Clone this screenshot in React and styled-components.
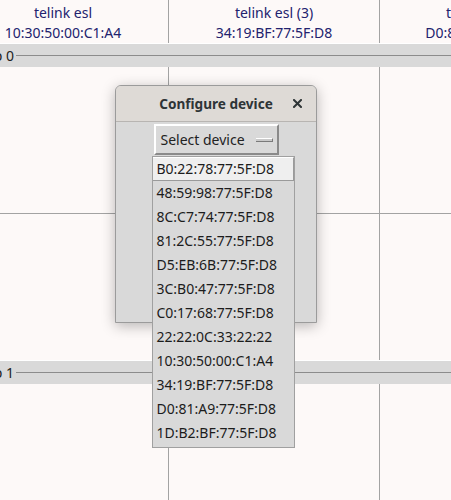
import React from 'react'
import styled, { createGlobalStyle } from 'styled-components'

const GlobalStyle = createGlobalStyle`
  html, body {
    margin: 0;
    padding: 0;
    background: #fdf9f8;
    overflow: hidden;
  }
  body {
    font-family: "Noto Sans", "DejaVu Sans", sans-serif;
    font-size: 14px;
  }
`

const Page = styled.div`
  position: relative;
  width: 451px;
  height: 500px;
  overflow: hidden;
`

// the table is scrolled a little to the right, so its first column starts off screen
const Sheet = styled.div`
  margin-left: -42px;
  width: 493px;
  height: 500px;
  display: flex;
  flex-direction: column;
`

const Header = styled.div`
  display: flex;
  height: 43px;
  flex-shrink: 0;
  border-bottom: 1px solid #ffffff;
`

const HeaderCell = styled.div`
  flex: 0 0 ${props => props.$w}px;
  box-sizing: border-box;
  border-right: 1px solid #a3a3a3;
  display: flex;
  flex-direction: column;
  align-items: center;
  padding-top: 3px;
  line-height: 20px;
  color: #22226e;
  white-space: nowrap;
`

const GroupBar = styled.div`
  height: 23px;
  flex-shrink: 0;
  background: #d9d9d9;
  border-top: ${props => (props.$top ? '1px solid #ffffff' : 'none')};
  display: flex;
  align-items: center;
  color: #222222;
  white-space: nowrap;
`

const GroupLabel = styled.span`
  margin-left: 3px;
`

const GroupRule = styled.div`
  flex: 1;
  height: 1px;
  margin-left: 2px;
  background: #8c8c8c;
`

const Grid = styled.div`
  height: ${props => (props.$h ? `${props.$h}px` : 'auto')};
  flex: ${props => (props.$h ? '0 0 auto' : '1')};
  display: flex;
  flex-direction: column;
`

const GridRow = styled.div`
  display: flex;
  height: ${props => (props.$h ? `${props.$h}px` : 'auto')};
  flex: ${props => (props.$h ? '0 0 auto' : '1')};
  box-sizing: border-box;
  border-bottom: ${props => (props.$line ? '1px solid #a3a3a3' : 'none')};
`

const GridCell = styled.div`
  flex: 0 0 ${props => props.$w}px;
  box-sizing: border-box;
  border-right: 1px solid #a3a3a3;
`

const Dialog = styled.div`
  position: absolute;
  left: 115px;
  top: 85px;
  width: 202px;
  height: 238px;
  box-sizing: border-box;
  border: 1px solid #9b9b9b;
  border-radius: 6px 6px 0 0;
  background: #d9d9d9;
  box-shadow: 0 3px 14px rgba(0, 0, 0, 0.28);
  display: flex;
  flex-direction: column;
`

const TitleBar = styled.div`
  position: relative;
  height: 35px;
  flex-shrink: 0;
  background: #dedad6;
  border-bottom: 1px solid #b8b5b2;
  border-radius: 5px 5px 0 0;
  display: flex;
  align-items: center;
  justify-content: center;
  font-size: 13.6px;
  font-weight: bold;
  color: #2e3436;
`

const CloseButton = styled.div`
  position: absolute;
  right: 14px;
  top: 13px;
  width: 9px;
  height: 9px;
  display: flex;
`

const DialogBody = styled.div`
  flex: 1;
  display: flex;
  flex-direction: column;
  align-items: center;
  padding-top: 2px;
`

const SelectWrap = styled.div`
  position: relative;
`

const SelectButton = styled.div`
  width: 125px;
  height: 31px;
  box-sizing: border-box;
  border: 2px solid;
  border-color: #ffffff #8a8a8a #8a8a8a #ffffff;
  background: #d9d9d9;
  display: flex;
  align-items: center;
  justify-content: space-between;
  padding: 0 4px 0 5px;
  color: #222222;
`

const Indicator = styled.div`
  width: 16px;
  height: 2px;
  background: #c9c9c9;
  border-top: 1px solid #ffffff;
  border-bottom: 1px solid #7a7a7a;
  border-right: 1px solid #7a7a7a;
`

const Menu = styled.div`
  position: absolute;
  left: -2px;
  top: 32px;
  width: 143px;
  box-sizing: border-box;
  border: 1px solid #a0a0a0;
  background: #d9d9d9;
  padding: 0 0 2px;
  z-index: 2;
`

const MenuItem = styled.div`
  height: 24px;
  box-sizing: border-box;
  padding-left: 4px;
  line-height: ${props => (props.$active ? '22px' : '24px')};
  color: #1c1c1c;
  white-space: nowrap;
  background: ${props => (props.$active ? '#efefef' : 'transparent')};
  border-top: ${props => (props.$active ? '1px solid #ffffff' : 'none')};
  border-bottom: ${props => (props.$active ? '1px solid #9a9a9a' : 'none')};
  border-right: ${props => (props.$active ? '1px solid #9a9a9a' : 'none')};
`

const columns = [
  { w: 211, name: 'telink esl', mac: '10:30:50:00:C1:A4' },
  { w: 211, name: 'telink esl (3)', mac: '34:19:BF:77:5F:D8' },
  { w: 211, name: 'telink esl (2)', mac: 'D0:81:A9:77:5F:D8' },
]

const devices = [
  'B0:22:78:77:5F:D8',
  '48:59:98:77:5F:D8',
  '8C:C7:74:77:5F:D8',
  '81:2C:55:77:5F:D8',
  'D5:EB:6B:77:5F:D8',
  '3C:B0:47:77:5F:D8',
  'C0:17:68:77:5F:D8',
  '22:22:0C:33:22:22',
  '10:30:50:00:C1:A4',
  '34:19:BF:77:5F:D8',
  'D0:81:A9:77:5F:D8',
  '1D:B2:BF:77:5F:D8',
]

function Cells() {
  return columns.map(col => <GridCell key={col.name} $w={col.w} />)
}

export default function App() {
  return (
    <Page>
      <GlobalStyle />
      <Sheet>
        <Header>
          {columns.map(col => (
            <HeaderCell key={col.name} $w={col.w}>
              <span>{col.name}</span>
              <span>{col.mac}</span>
            </HeaderCell>
          ))}
        </Header>
        <GroupBar>
          <GroupLabel>Group 0</GroupLabel>
          <GroupRule />
        </GroupBar>
        <Grid $h={293}>
          <GridRow $h={147} $line>
            <Cells />
          </GridRow>
          <GridRow>
            <Cells />
          </GridRow>
        </Grid>
        <GroupBar $top>
          <GroupLabel>Group 1</GroupLabel>
          <GroupRule />
        </GroupBar>
        <Grid>
          <GridRow>
            <Cells />
          </GridRow>
        </Grid>
      </Sheet>

      <Dialog>
        <TitleBar>
          Configure device
          <CloseButton>
            <svg width="9" height="9" viewBox="0 0 9 9">
              <path d="M1 1 L8 8 M8 1 L1 8" stroke="#2e3436" strokeWidth="2" strokeLinecap="square" />
            </svg>
          </CloseButton>
        </TitleBar>
        <DialogBody>
          <SelectWrap>
            <SelectButton>
              Select device
              <Indicator />
            </SelectButton>
            <Menu>
              {devices.map((d, i) => (
                <MenuItem key={d} $active={i === 0}>
                  {d}
                </MenuItem>
              ))}
            </Menu>
          </SelectWrap>
        </DialogBody>
      </Dialog>
    </Page>
  )
}
